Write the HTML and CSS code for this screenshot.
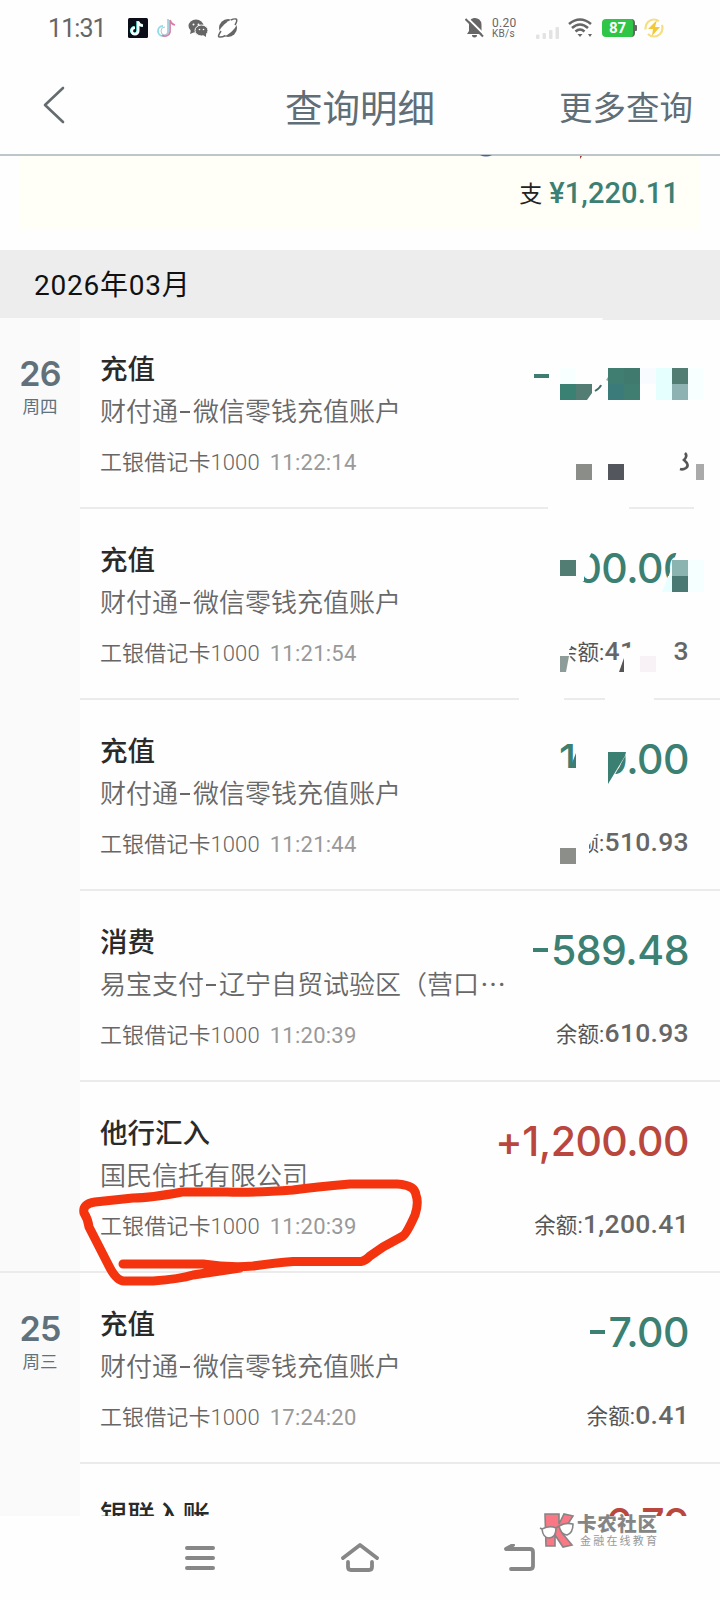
FILE: index.html
```html
<!DOCTYPE html>
<html lang="zh-CN">
<head>
<meta charset="utf-8">
<title>查询明细</title>
<link rel="stylesheet" href="styles.css">
</head>
<body>
<div class="screen">
  <header class="status">
    <span class="clock">11:31</span>
    <svg class="status-left" width="112" height="22" viewBox="0 0 112 22">
      <rect x="0" y="1" width="20" height="20" rx="1.5" fill="#0b0d18"/>
      <g fill="none" stroke-width="2.6">
        <path d="M10.2 4.500V14a3.200 3.200 0 1 1-3.200-3.200M10.200 5q.8 3.500 4.800 3.800" stroke="#5fe" transform="translate(-.6 -.4)"/>
        <path d="M10.200 4.500V14a3.200 3.200 0 1 1-3.200-3.200M10.200 5q.8 3.500 4.800 3.800" stroke="#fff"/>
      </g>
      <g fill="none" stroke-width="1.800">
        <path d="M40 2v12a5 5 0 1 1-5-5" stroke="#8fdbe6"/>
        <path d="M42 3v12a5 5 0 0 1-8 3M42 3q1 4 5 5" stroke="#d77fa4"/>
        <path d="M41 3v11a4 4 0 1 1-4-4" stroke="#b5c5d6" stroke-width="1"/>
      </g>
      <g fill="#666">
        <ellipse cx="68" cy="9" rx="7.500" ry="6.500"/><path d="M63 13l-1 4 5-2z"/>
        <ellipse cx="73.500" cy="13.500" rx="6.500" ry="5.500" stroke="#fff" stroke-width="1"/><path d="M75 18l3 2 0-4z"/>
      </g>
      <g fill="#fff"><circle cx="65.500" cy="7.500" r="1"/><circle cx="70.500" cy="7.500" r="1"/><circle cx="71.500" cy="12.500" r=".8"/><circle cx="75.500" cy="12.500" r=".8"/></g>
      <circle cx="100" cy="11" r="9" fill="#666"/>
      <ellipse cx="100" cy="11" rx="12" ry="5.200" fill="#fff" transform="rotate(-42 100 11)"/>
      <path d="M93 14q-4 6-1.500 6 2 .5 6-1.500M107 8q3-5 1-6-2-.5-5 1" fill="none" stroke="#666" stroke-width="1.500"/>
    </svg>
    <span class="grow"></span>
    <svg class="bell" width="20" height="22" viewBox="0 0 20 22">
      <path d="M9 1a6.500 6.500 0 0 1 7.500 6.500V14l1.500 3H2l2-3V7a6 6 0 0 1 5-6zM7 18h5a2.500 2.500 0 0 1-5 0z" fill="#666"/>
      <path d="M2.500 1L20 18.500" stroke="#fff" stroke-width="2"/><path d="M.5 2L18 19.500" stroke="#666" stroke-width="2"/>
    </svg>
    <span class="speed"><span>0.20</span><span>KB/s</span></span>
    <svg class="signal" width="24" height="14" viewBox="0 0 24 14" fill="#e3e3e3">
      <rect x="0" y="8.500" width="3.500" height="4.500" rx="1"/><rect x="6.500" y="7" width="3.500" height="6" rx="1"/><rect x="13" y="4" width="3.500" height="9" rx="1"/><rect x="19.500" y="1" width="3.500" height="12" rx="1"/>
    </svg>
    <svg class="wifi" width="24" height="20" viewBox="0 0 24 20" fill="none" stroke="#666" stroke-width="2.600">
      <path d="M1 6Q12-3 23 6M4 10Q12 3 20 10M7.500 13.500Q12 9.500 16.500 13.500"/><path d="M9.500 16h5L12 19zM20 16h4l-2 3z" fill="#666" stroke="none"/>
    </svg>
    <span class="battery">87</span>
    <svg class="flash" width="20" height="20" viewBox="0 0 20 20">
      <circle cx="10" cy="10" r="8.500" fill="none" stroke="#f5de83" stroke-width="2.200" stroke-dasharray="20 5"/><path d="M13 2L4 11h5l-1 7 8-9h-5z" fill="#f3c936"/>
    </svg>
  </header>

  <nav class="titlebar">
    <svg class="back" width="22" height="38" viewBox="0 0 22 38"><path d="M20 2L2 19l18 17" fill="none" stroke="#646c70" stroke-width="2.600" stroke-linecap="round" stroke-linejoin="round"/></svg>
    <h1 class="title">查询明细</h1>
    <span class="more">更多查询</span>
  </nav>

  <section class="summary">
    <div class="summary-card"><span class="out-label">支</span><span class="out-value">¥1,220.11</span></div>
  </section>
  <h2 class="month">2026年03月</h2>

  <main class="ledger">
    <section class="day">
      <aside class="date"><span class="num">26</span><span class="week">周四</span></aside>
      <div class="rows">
        <article class="row">
          <div class="info"><b class="kind">充值</b><span class="desc">财付通<i class="dash"></i>微信零钱充值账户</span><span class="card">工银借记卡1000<time>11:22:14</time></span></div>
        </article>
        <article class="row">
          <div class="info"><b class="kind">充值</b><span class="desc">财付通<i class="dash"></i>微信零钱充值账户</span><span class="card">工银借记卡1000<time>11:21:54</time></span></div>
          <div class="money"><span class="amount">00.00</span><span class="balance">余额:<b>410.93</b></span></div>
        </article>
        <article class="row">
          <div class="info"><b class="kind">充值</b><span class="desc">财付通<i class="dash"></i>微信零钱充值账户</span><span class="card">工银借记卡1000<time>11:21:44</time></span></div>
          <div class="money"><span class="amount">100.00</span><span class="balance">余额:<b>510.93</b></span></div>
        </article>
        <article class="row">
          <div class="info"><b class="kind">消费</b><span class="desc">易宝支付<i class="dash"></i>辽宁自贸试验区（营口<span class="dots">⋯</span></span><span class="card">工银借记卡1000<time>11:20:39</time></span></div>
          <div class="money"><span class="amount"><i class="minus"></i>589.48</span><span class="balance">余额:<b>610.93</b></span></div>
        </article>
        <article class="row">
          <div class="info"><b class="kind">他行汇入</b><span class="desc">国民信托有限公司</span><span class="card">工银借记卡1000<time>11:20:39</time></span></div>
          <div class="money"><span class="amount income">+1,200.00</span><span class="balance">余额:<b>1,200.41</b></span></div>
        </article>
      </div>
    </section>
    <section class="day">
      <aside class="date"><span class="num">25</span><span class="week">周三</span></aside>
      <div class="rows">
        <article class="row">
          <div class="info"><b class="kind">充值</b><span class="desc">财付通<i class="dash"></i>微信零钱充值账户</span><span class="card">工银借记卡1000<time>17:24:20</time></span></div>
          <div class="money"><span class="amount"><i class="minus"></i>7.00</span><span class="balance">余额:<b>0.41</b></span></div>
        </article>
        <article class="row">
          <div class="info"><b class="kind">银联入账</b></div>
          <div class="money"><span class="amount income">+6.79</span></div>
        </article>
      </div>
    </section>
  </main>

  <footer class="navkeys">
    <svg width="30" height="24" viewBox="0 0 30 24"><path d="M2 2h26M2 12h26M2 22h26" stroke="#878787" stroke-width="4" stroke-linecap="round"/></svg>
    <svg width="38" height="30" viewBox="0 0 38 30" fill="none" stroke="#878787" stroke-width="3.800" stroke-linecap="round" stroke-linejoin="round"><path d="M2 15L19 2l17 13M7 19v5q0 3 3 3h18q3 0 3-3v-5"/></svg>
    <svg width="32" height="28" viewBox="0 0 32 28" fill="none" stroke="#878787" stroke-width="3.800" stroke-linecap="round" stroke-linejoin="round"><path d="M10 1L3 5h24q3 0 3 3v14q0 3-3 3H8"/></svg>
  </footer>

  <svg class="marks" width="720" height="1600" viewBox="0 0 720 1600">
    <!-- tails of the income line above the summary -->
    <path d="M480 155q6 3 12 0z" fill="#4a5fa0"/><path d="M580 156h2l-2 3z" fill="#a33"/>
    <path d="M603 318h117v2H602z" fill="#ededed"/>

    <!-- mosaic, first row -->
    <rect x="534" y="374" width="15" height="4" fill="#3f7c71"/>
    <rect x="560" y="368" width="16" height="16" fill="#f8ffff"/>
    <rect x="560" y="384" width="16" height="16" fill="#3a8073"/><path d="M576 384h16v9l-5 7h-11z" fill="#537d73"/>
    <path d="M595 391q5-3 6-6" stroke="#3f6c64" stroke-width="2" fill="none"/><path d="M606 380l2-3v4z" fill="#9aa"/>
    <rect x="608" y="368" width="32" height="32" fill="#3f7e71"/><rect x="608" y="384" width="16" height="16" fill="#3b7c7b"/><rect x="624" y="368" width="16" height="16" fill="#40796e"/>
    <rect x="640" y="368" width="16" height="16" fill="#f8fbff"/><rect x="656" y="368" width="16" height="32" fill="#e5ffff"/>
    <rect x="672" y="368" width="16" height="16" fill="#527d73"/><rect x="672" y="384" width="16" height="16" fill="#8eb2b2"/><rect x="688" y="368" width="16" height="32" fill="#f8ffff"/>
    <rect x="576" y="464" width="16" height="16" fill="#8b8d89"/><rect x="608" y="464" width="16" height="16" fill="#53565d"/><rect x="696" y="464" width="8" height="16" fill="#aaa"/>
    <path d="M685 453q3 3-1 7q6 5 2 8q-3 2-6 1" fill="none" stroke="#555" stroke-width="2.600"/>
    <path d="M548 506h81v4h-81zM694 506h26v4h-26z" fill="#fefefe"/>

    <!-- mosaic, second row -->
    <path d="M576 546h19l-11 21v14h-8z" fill="#fefefe"/>
    <rect x="560" y="560" width="16" height="16" fill="#527d73"/>
    <path d="M678 548h14v46h-30l6-16z" fill="#fefefe"/><path d="M668 576h4v16h-10z" fill="#e9ffff"/><rect x="688" y="560" width="16" height="32" fill="#f5ffff"/>
    <rect x="672" y="560" width="16" height="16" fill="#8bb3b0"/><rect x="672" y="576" width="16" height="16" fill="#4a7973"/>
    <path d="M550 636h19v30h-19zM569 636h8l-8 14z" fill="#fefefe"/><path d="M560 656h9l-3 16h-6z" fill="#8d9c98"/>
    <path d="M620.500 650l11-3v-11h42v34h-53z" fill="#fefefe"/><path d="M624 658v14h-5z" fill="#555"/>
    <rect x="640" y="656" width="16" height="16" fill="#f8f2f6"/>
    <path d="M519 697h45v4h-45zM605 697h49v4h-49z" fill="#fefefe"/>

    <!-- mosaic, third row -->
    <path d="M576 738h32v40h-32zM567 768h10v10h-10z" fill="#fefefe"/>
    <path d="M576 753v15h-6z" fill="#3f7c71"/>
    <path d="M606 738h22v13l-15 27h-7z" fill="#fefefe"/><path d="M608 752h18l-1 4-17 28z" fill="#397f72"/>
    <path d="M550 825h39v40h-39zM589 825h9v7l-9 13z" fill="#fefefe"/><rect x="560" y="848" width="16" height="16" fill="#8b8e89"/>

    <!-- hand-drawn marker -->
    <g fill="none" stroke="#f4340f" stroke-width="9" stroke-linecap="round" stroke-linejoin="round">
      <path d="M123 1264H203Q230 1268 253 1266Q275 1263 293 1261.500H361Q365 1261 370 1256L383 1247L403 1236Q407 1233 415 1215Q419 1203 416 1195Q415 1185 397 1184H350Q315 1187 293 1190Q250 1193 227 1192H182Q150 1198 133 1198L95 1202Q82 1204 84 1213Q88 1219 89 1227L110 1268Q117 1281 124 1281H153Q180 1279 193 1275L240 1268"/>
    </g>

    <!-- community watermark -->
    <g stroke="#858585" stroke-width="1.600">
      <path d="M545 1514h14v10l5-10 9 2-11 17 10 12-9 2-8-12v11h-9z" fill="#fa7785"/>
      <path d="M542 1529q8-4 14-1 0 10-7 10-6 0-7-9zM559 1526q6-4 14-2 0 9-6 11-6 0-8-9z" fill="#fff"/><path d="M540 1528l2 1M556 1528l3-2" fill="none"/>
    </g>
    <text class="wm-name" x="577" y="1531" textLength="80">卡农社区</text>
    <text class="wm-sub" x="580" y="1545" textLength="77">金融在线教育</text>
  </svg>
</div>
</body>
</html>
```
FILE: styles.css
```css
* { box-sizing: border-box; }
body { margin: 0; background: #fefefe; }
.screen {
  position: relative;
  width: 720px;
  height: 1600px;
  overflow: hidden;
  display: flex;
  flex-direction: column;
  background: #fefefe;
  font-family: Roboto, "Noto Sans CJK SC", sans-serif;
  white-space: nowrap;
}
i { font-style: normal; }

.status { height: 56px; display: flex; align-items: center; padding-left: 48px; padding-right: 56px; color: #666; }
.clock { width: 80px; font-size: 25px; letter-spacing: -0.9px; }
.grow { flex: 1; }
.bell { margin-right: 7px; }
.speed { width: 27px; display: flex; flex-direction: column; font-size: 12px; line-height: 12px; letter-spacing: 0.3px; }
.speed span:last-child { font-size: 10px; line-height: 10px; }
.signal { margin: 9px 8px 0 17px; }
.wifi { margin-right: 10px; }
.battery {
  position: relative;
  width: 33px; height: 18px; margin-right: 9px;
  border-radius: 4px;
  background: #2fc546;
  color: #fff;
  font-size: 15px; font-weight: 700; line-height: 19px; text-align: center;
  border-right: 2px solid #666;
}
.battery::after { content: ""; position: absolute; right: -4px; top: 6px; width: 3px; height: 6px; border-radius: 1px; background: #666; }

.titlebar {
  height: 100px;
  display: grid; grid-template-columns: 240px 1fr 240px; align-items: center;
  padding: 0 27px 0 43px;
  border-bottom: 2px solid #bdc7ca;
  color: #5f6e77;
}
.title { margin: 0; padding-top: 7px; font-size: 37.500px; font-weight: 400; line-height: 50px; text-align: center; transform: translateX(-8px); }
.more { padding-top: 7px; font-size: 33.500px; line-height: 50px; text-align: right; }

.summary { height: 94px; padding: 0 20px 20px; }
.summary-card { height: 74px; display: flex; justify-content: flex-end; align-items: center; padding-right: 21px; background: #fffef7; }
.out-label { font-size: 23px; color: #222; margin: -3px 7px 0 0; }
.out-value { font-size: 29px; font-weight: 500; letter-spacing: 0.1px; color: #3b8072; }

.month { margin: 0; height: 68px; padding: 2px 0 0 34px; background: #ededed; color: #111; font-size: 28px; font-weight: 400; line-height: 68px; letter-spacing: 0.75px; }

.ledger { height: 1198px; overflow: hidden; }
.day { display: flex; border-bottom: 2px solid #ebebeb; }
.date { width: 80px; background: #fafafa; display: flex; flex-direction: column; align-items: center; padding-top: 34px; color: #60717b; }
.num { font-family: Inter, sans-serif; font-size: 34px; font-weight: 600; letter-spacing: -0.8px; line-height: 43px; }
.week { font-size: 17.500px; line-height: 24px; }
.rows { flex: 1; }
.row { height: 191px; display: flex; justify-content: space-between; border-bottom: 2px solid #ebebeb; padding: 31px 31px 0 20px; }
.row:last-child { height: 189px; border-bottom: 0; }
.day:first-child .row:first-child { height: 191px; }
.info { display: flex; flex-direction: column; }
.kind { font-size: 27.500px; font-weight: 500; line-height: 41px; color: #2a2a2a; }
.desc { font-size: 26px; line-height: 40px; margin-top: 2px; color: #686868; font-weight: 350; }
.dash { display: inline-block; width: 10px; height: 2px; margin: 0 3px 8px 2px; background: #686868; }
.dots { margin-left: 1px; }
.card { font-size: 22px; line-height: 32px; margin-top: 15px; color: #666; font-weight: 350; letter-spacing: 0.1px; }
time { margin-left: 10px; color: #999; font-weight: 400; letter-spacing: 0.25px; }
.money { display: flex; flex-direction: column; align-items: flex-end; }
.amount { display: flex; align-items: center; margin-top: 3px; font-family: Inter, sans-serif; font-size: 41px; font-weight: 500; line-height: 50px; letter-spacing: -0.5px; color: #3b8072; }
.minus { width: 15px; height: 4px; margin-right: 3px; background: #3b8072; }
.income { color: #b9473d; }
.balance { margin-top: 42px; font-size: 21.500px; line-height: 32px; color: #555; letter-spacing: 0.2px; }
.balance b { font-size: 26.500px; font-weight: 500; letter-spacing: 0.3px; color: #666; }

.navkeys { height: 84px; display: flex; align-items: center; gap: 128px; padding-left: 185px; }
.navkeys svg:nth-child(2) { margin-left: -2px; }
.navkeys svg:nth-child(3) { margin-left: -4px; }

.marks { position: absolute; left: 0; top: 0; }
.wm-name { font-size: 19.500px; font-weight: 900; fill: #858585; }
.wm-sub { font-size: 11px; fill: #999; }
```
